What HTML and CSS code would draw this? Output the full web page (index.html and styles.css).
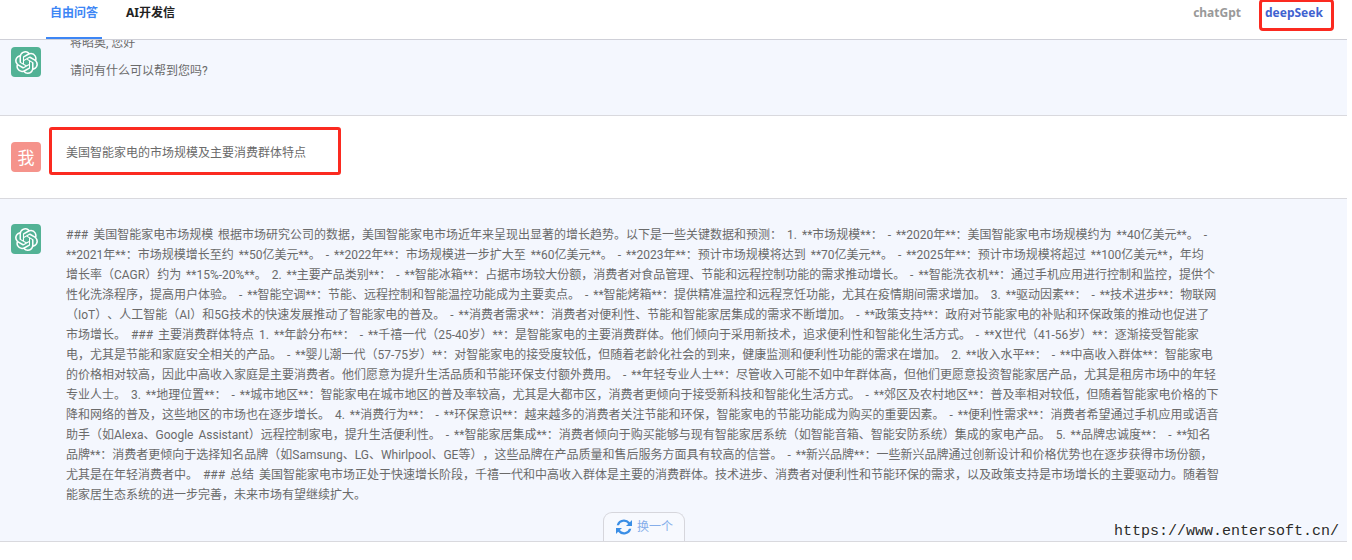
FILE: index.html
```html
<!DOCTYPE html>
<html lang="zh-CN">
<head>
  <meta charset="UTF-8" />
  <title>自由问答</title>
  <link rel="stylesheet" href="styles.css">
</head>
<body>
  <div class="page">
    <header class="topbar">
      <nav class="tabs">
        <a class="tab active">自由问答</a>
        <a class="tab">AI开发信</a>
      </nav>
      <div class="models">
        <a class="model">chatGpt</a>
        <a class="model current">deepSeek</a>
      </div>
    </header>

    <section class="msg msg-first">
      <div class="avatar gpt">
        <svg viewBox="0 0 24 24"><use href="#gpt-logo"/></svg>
      </div>
      <div class="greeting">
        <p class="hello">蒋昭奥, 您好</p>
        <p>请问有什么可以帮到您吗?</p>
      </div>
    </section>

    <section class="msg msg-user">
      <div class="avatar me">我</div>
      <div class="bubble">美国智能家电的市场规模及主要消费群体特点</div>
    </section>

    <section class="msg msg-answer">
      <div class="avatar gpt">
        <svg viewBox="0 0 24 24"><use href="#gpt-logo"/></svg>
      </div>
      <p class="answer">### 美国智能家电市场规模 根据市场研究公司的数据，美国智能家电市场近年来呈现出显著的增长趋势。以下是一些关键数据和预测： 1. **市场规模**： - **2020年**：美国智能家电市场规模约为 **40亿美元**。 -<br>
**2021年**：市场规模增长至约 **50亿美元**。 - **2022年**：市场规模进一步扩大至 **60亿美元**。 - **2023年**：预计市场规模将达到 **70亿美元**。 - **2025年**：预计市场规模将超过 **100亿美元**，年均<br>
增长率（CAGR）约为 **15%-20%**。 2. **主要产品类别**： - **智能冰箱**：占据市场较大份额，消费者对食品管理、节能和远程控制功能的需求推动增长。 - **智能洗衣机**：通过手机应用进行控制和监控，提供个<br>
性化洗涤程序，提高用户体验。 - **智能空调**：节能、远程控制和智能温控功能成为主要卖点。 - **智能烤箱**：提供精准温控和远程烹饪功能，尤其在疫情期间需求增加。 3. **驱动因素**： - **技术进步**：物联网<br>
（IoT）、人工智能（AI）和5G技术的快速发展推动了智能家电的普及。 - **消费者需求**：消费者对便利性、节能和智能家居集成的需求不断增加。 - **政策支持**：政府对节能家电的补贴和环保政策的推动也促进了<br>
市场增长。 ### 主要消费群体特点 1. **年龄分布**： - **千禧一代（25-40岁）**：是智能家电的主要消费群体。他们倾向于采用新技术，追求便利性和智能化生活方式。 - **X世代（41-56岁）**：逐渐接受智能家<br>
电，尤其是节能和家庭安全相关的产品。 - **婴儿潮一代（57-75岁）**：对智能家电的接受度较低，但随着老龄化社会的到来，健康监测和便利性功能的需求在增加。 2. **收入水平**： - **中高收入群体**：智能家电<br>
的价格相对较高，因此中高收入家庭是主要消费者。他们愿意为提升生活品质和节能环保支付额外费用。 - **年轻专业人士**：尽管收入可能不如中年群体高，但他们更愿意投资智能家居产品，尤其是租房市场中的年轻<br>
专业人士。 3. **地理位置**： - **城市地区**：智能家电在城市地区的普及率较高，尤其是大都市区，消费者更倾向于接受新科技和智能化生活方式。 - **郊区及农村地区**：普及率相对较低，但随着智能家电价格的下<br>
降和网络的普及，这些地区的市场也在逐步增长。 4. **消费行为**： - **环保意识**：越来越多的消费者关注节能和环保，智能家电的节能功能成为购买的重要因素。 - **便利性需求**：消费者希望通过手机应用或语音<br>
助手（如Alexa、Google Assistant）远程控制家电，提升生活便利性。 - **智能家居集成**：消费者倾向于购买能够与现有智能家居系统（如智能音箱、智能安防系统）集成的家电产品。 5. **品牌忠诚度**： - **知名<br>
品牌**：消费者更倾向于选择知名品牌（如Samsung、LG、Whirlpool、GE等），这些品牌在产品质量和售后服务方面具有较高的信誉。 - **新兴品牌**：一些新兴品牌通过创新设计和价格优势也在逐步获得市场份额，<br>
尤其是在年轻消费者中。 ### 总结 美国智能家电市场正处于快速增长阶段，千禧一代和中高收入群体是主要的消费群体。技术进步、消费者对便利性和节能环保的需求，以及政策支持是市场增长的主要驱动力。随着智<br>
能家居生态系统的进一步完善，未来市场有望继续扩大。</p>
      <button class="swap">
        <svg class="swap-icon" viewBox="3 3 18 18"><path d="M12 3.500a8.500 8.500 0 0 1 6.600 3.100L21 4.200V11h-6.800l2.500-2.500A6 6 0 0 0 6.300 10H3.800A8.500 8.500 0 0 1 12 3.500zM3 13h6.800l-2.500 2.500A6 6 0 0 0 17.700 14h2.500A8.500 8.500 0 0 1 5.400 17.400L3 19.800z"/></svg>
        换一个
      </button>
    </section>
  </div>

  <div class="watermark">https://www.entersoft.cn/</div>

  <svg class="defs" width="0" height="0">
    <symbol id="gpt-logo" viewBox="0 0 24 24">
      <path fill="#fff" d="M22.2819 9.8211a5.9847 5.9847 0 0 0-.5157-4.9108 6.0462 6.0462 0 0 0-6.5098-2.9A6.0651 6.0651 0 0 0 4.9807 4.1818a5.9847 5.9847 0 0 0-3.9977 2.9 6.0462 6.0462 0 0 0 .7427 7.0966 5.98 5.98 0 0 0 .511 4.9107 6.051 6.051 0 0 0 6.5146 2.9001A5.9847 5.9847 0 0 0 13.2599 24a6.0557 6.0557 0 0 0 5.7718-4.2058 5.9894 5.9894 0 0 0 3.9977-2.9001 6.0557 6.0557 0 0 0-.7475-7.0729zm-9.022 12.6081a4.4755 4.4755 0 0 1-2.8764-1.0408l.1419-.0804 4.7783-2.7582a.7948.7948 0 0 0 .3927-.6813v-6.7369l2.02 1.1686a.071.071 0 0 1 .038.052v5.5826a4.504 4.504 0 0 1-4.4945 4.4944zm-9.6607-4.1254a4.4708 4.4708 0 0 1-.5346-3.0137l.142.0852 4.783 2.7582a.7712.7712 0 0 0 .7806 0l5.8428-3.3685v2.3324a.0804.0804 0 0 1-.0332.0615L9.74 19.9502a4.4992 4.4992 0 0 1-6.1408-1.6464zM2.3408 7.8956a4.485 4.485 0 0 1 2.3655-1.9728V11.6a.7664.7664 0 0 0 .3879.6765l5.8144 3.3543-2.0201 1.1685a.0757.0757 0 0 1-.071 0l-4.8303-2.7865A4.504 4.504 0 0 1 2.3408 7.872zm16.5963 3.8558L13.1038 8.364 15.1192 7.2a.0757.0757 0 0 1 .071 0l4.8303 2.7913a4.4944 4.4944 0 0 1-.6765 8.1042v-5.6772a.79.79 0 0 0-.407-.667zm2.0107-3.0231l-.142-.0852-4.7735-2.7818a.7759.7759 0 0 0-.7854 0L9.409 9.2297V6.8974a.0662.0662 0 0 1 .0284-.0615l4.8303-2.7866a4.4992 4.4992 0 0 1 6.6802 4.66zM8.3065 12.863l-2.02-1.1638a.0804.0804 0 0 1-.038-.0567V6.0742a4.4992 4.4992 0 0 1 7.3757-3.4537l-.142.0805L8.704 5.459a.7948.7948 0 0 0-.3927.6813zm1.0976-2.3654l2.602-1.4998 2.6069 1.4998v2.9994l-2.5974 1.4997-2.6067-1.4997Z"/>
    </symbol>
  </svg>
</body>
</html>
```

FILE: styles.css
```css
html, body {
  height: 100%;
}
body {
  margin: 0;
  background: #fff;
  color: #6a6a6a;
  font-family: Roboto, "Noto Sans CJK SC", sans-serif;
  font-size: 12px;
  line-height: 20px;
  text-spacing-trim: space-all;
  overflow: hidden;
}
p {
  margin: 0;
}
.defs {
  position: absolute;
}
.page {
  width: 1347px;
}

/* top bar */
.topbar {
  display: flex;
  justify-content: space-between;
  height: 39px;
  padding: 0 13px 0 46px;
  background: #fff;
  border-bottom: 1px solid #cfd0d8;
  font-family: "Noto Sans", "Noto Sans CJK SC", sans-serif;
}
.tabs {
  display: flex;
  gap: 20px;
}
.tab {
  padding: 3px 4px 0;
  height: 36px;
  font-weight: 700;
  color: #222;
}
.tab.active {
  color: #3d86f5;
  border-bottom: 2px solid #3d86f5;
  height: 34px;
}
.models {
  display: flex;
  align-items: flex-start;
  gap: 18px;
}
.model {
  padding-top: 3px;
  font-weight: 700;
  color: #999;
}
.model.current {
  box-sizing: border-box;
  width: 75px;
  height: 32px;
  margin-top: -1px;
  padding: 1px 0 0 3px;
  color: #3f62d0;
  border: 3px solid #fb2a20;
  border-radius: 4px;
}

/* messages */
.msg {
  display: flex;
  align-items: flex-start;
  padding-left: 11px;
  border-bottom: 1px solid #d9d9de;
  overflow: hidden;
}
.avatar {
  flex: none;
  display: flex;
  align-items: center;
  justify-content: center;
  width: 30px;
  height: 30px;
  border-radius: 4px;
}
.avatar svg {
  width: 23px;
  height: 23px;
}
.avatar.gpt {
  background: #52b295;
}
.avatar.me {
  background: #f5938b;
  color: #fff;
  font-family: "Noto Sans CJK SC", sans-serif;
  font-size: 17px;
}
.msg-first {
  box-sizing: border-box;
  height: 76px;
  padding-top: 7px;
  background: #f4f7fe;
}
.greeting {
  margin: -14px 0 0 29px;
}
.hello {
  margin-bottom: 8px;
}
.msg-user {
  box-sizing: border-box;
  height: 83px;
  padding-top: 11px;
  background: #fff;
}
.msg-user .avatar {
  margin-top: 15px;
}
.bubble {
  box-sizing: border-box;
  width: 292px;
  height: 48px;
  margin-left: 8px;
  padding: 13px 0 0 14px;
  border: 3px solid #fb2a20;
  border-radius: 3px;
}
.msg-answer {
  position: relative;
  box-sizing: border-box;
  height: 343px;
  padding-top: 25px;
  background: #f4f7fe;
}
.answer {
  margin: 1px 0 0 25px;
  white-space: nowrap;
  word-spacing: 2px;
}
.swap {
  position: absolute;
  left: 603px;
  bottom: 0;
  display: flex;
  align-items: center;
  gap: 5px;
  box-sizing: border-box;
  width: 82px;
  height: 29px;
  padding: 0 0 0 12px;
  background: #f7f9fe;
  border: 1px solid #d6d6dc;
  border-bottom: none;
  border-radius: 9px 9px 0 0;
  font: inherit;
  color: #86aeea;
}
.swap-icon {
  width: 16px;
  height: 16px;
  fill: #3a8ee6;
}

/* site watermark over the shot */
.watermark {
  position: absolute;
  left: 1114px;
  top: 522px;
  font-family: "Liberation Mono", monospace;
  font-size: 15px;
  color: #2b2b2b;
  text-shadow: 0 -2px 0 #fff;
}
```
